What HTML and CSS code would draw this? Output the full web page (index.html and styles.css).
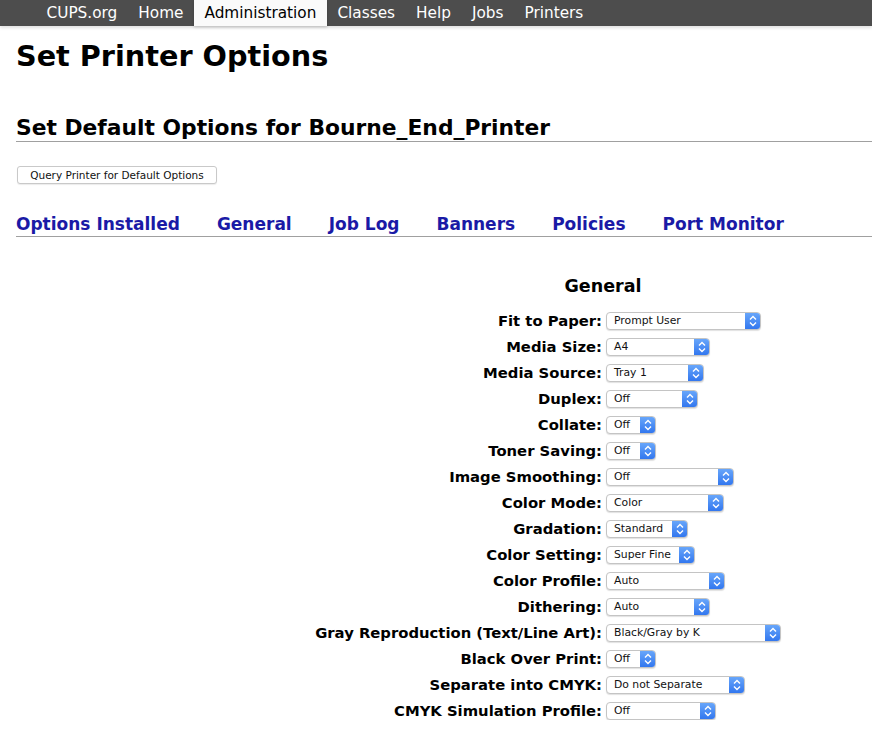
FILE: index.html
```html
<!DOCTYPE html>
<html>
<head>
<meta charset="utf-8">
<title>Set Printer Options - CUPS</title>
<link rel="stylesheet" href="styles.css">
</head>
<body>
<nav class="topbar">
  <a class="nav-item">CUPS.org</a>
  <a class="nav-item">Home</a>
  <a class="nav-item active">Administration</a>
  <a class="nav-item">Classes</a>
  <a class="nav-item">Help</a>
  <a class="nav-item">Jobs</a>
  <a class="nav-item">Printers</a>
</nav>
<main class="page">
  <h1 class="title">Set Printer Options</h1>
  <h2 class="subtitle">Set Default Options for Bourne_End_Printer</h2>
  <div class="query-row"><button class="btn">Query Printer for Default Options</button></div>
  <div class="tabs">
    <a class="tab">Options Installed</a>
    <a class="tab">General</a>
    <a class="tab">Job Log</a>
    <a class="tab">Banners</a>
    <a class="tab">Policies</a>
    <a class="tab">Port Monitor</a>
  </div>
  <h3 class="section-title">General</h3>
  <div class="form">
    <label class="lbl">Fit to Paper:</label><div class="sel" style="width:155px"><span class="val">Prompt User</span><span class="arr"><svg viewBox="0 0 16 18" width="16" height="18"><path d="M5 7.5 L8 4.5 L11 7.5 M5 10.5 L8 13.5 L11 10.5" fill="none" stroke="#fff" stroke-width="1.4"/></svg></span></div>
    <label class="lbl">Media Size:</label><div class="sel" style="width:104px"><span class="val">A4</span><span class="arr"><svg viewBox="0 0 16 18" width="16" height="18"><path d="M5 7.5 L8 4.5 L11 7.5 M5 10.5 L8 13.5 L11 10.5" fill="none" stroke="#fff" stroke-width="1.4"/></svg></span></div>
    <label class="lbl">Media Source:</label><div class="sel" style="width:98px"><span class="val">Tray 1</span><span class="arr"><svg viewBox="0 0 16 18" width="16" height="18"><path d="M5 7.5 L8 4.5 L11 7.5 M5 10.5 L8 13.5 L11 10.5" fill="none" stroke="#fff" stroke-width="1.4"/></svg></span></div>
    <label class="lbl">Duplex:</label><div class="sel" style="width:92px"><span class="val">Off</span><span class="arr"><svg viewBox="0 0 16 18" width="16" height="18"><path d="M5 7.5 L8 4.5 L11 7.5 M5 10.5 L8 13.5 L11 10.5" fill="none" stroke="#fff" stroke-width="1.4"/></svg></span></div>
    <label class="lbl">Collate:</label><div class="sel" style="width:50px"><span class="val">Off</span><span class="arr"><svg viewBox="0 0 16 18" width="16" height="18"><path d="M5 7.5 L8 4.5 L11 7.5 M5 10.5 L8 13.5 L11 10.5" fill="none" stroke="#fff" stroke-width="1.4"/></svg></span></div>
    <label class="lbl">Toner Saving:</label><div class="sel" style="width:50px"><span class="val">Off</span><span class="arr"><svg viewBox="0 0 16 18" width="16" height="18"><path d="M5 7.5 L8 4.5 L11 7.5 M5 10.5 L8 13.5 L11 10.5" fill="none" stroke="#fff" stroke-width="1.4"/></svg></span></div>
    <label class="lbl">Image Smoothing:</label><div class="sel" style="width:128px"><span class="val">Off</span><span class="arr"><svg viewBox="0 0 16 18" width="16" height="18"><path d="M5 7.5 L8 4.5 L11 7.5 M5 10.5 L8 13.5 L11 10.5" fill="none" stroke="#fff" stroke-width="1.4"/></svg></span></div>
    <label class="lbl">Color Mode:</label><div class="sel" style="width:118px"><span class="val">Color</span><span class="arr"><svg viewBox="0 0 16 18" width="16" height="18"><path d="M5 7.5 L8 4.5 L11 7.5 M5 10.5 L8 13.5 L11 10.5" fill="none" stroke="#fff" stroke-width="1.4"/></svg></span></div>
    <label class="lbl">Gradation:</label><div class="sel" style="width:82px"><span class="val">Standard</span><span class="arr"><svg viewBox="0 0 16 18" width="16" height="18"><path d="M5 7.5 L8 4.5 L11 7.5 M5 10.5 L8 13.5 L11 10.5" fill="none" stroke="#fff" stroke-width="1.4"/></svg></span></div>
    <label class="lbl">Color Setting:</label><div class="sel" style="width:89px"><span class="val">Super Fine</span><span class="arr"><svg viewBox="0 0 16 18" width="16" height="18"><path d="M5 7.5 L8 4.5 L11 7.5 M5 10.5 L8 13.5 L11 10.5" fill="none" stroke="#fff" stroke-width="1.4"/></svg></span></div>
    <label class="lbl">Color Profile:</label><div class="sel" style="width:119px"><span class="val">Auto</span><span class="arr"><svg viewBox="0 0 16 18" width="16" height="18"><path d="M5 7.5 L8 4.5 L11 7.5 M5 10.5 L8 13.5 L11 10.5" fill="none" stroke="#fff" stroke-width="1.4"/></svg></span></div>
    <label class="lbl">Dithering:</label><div class="sel" style="width:104px"><span class="val">Auto</span><span class="arr"><svg viewBox="0 0 16 18" width="16" height="18"><path d="M5 7.5 L8 4.5 L11 7.5 M5 10.5 L8 13.5 L11 10.5" fill="none" stroke="#fff" stroke-width="1.4"/></svg></span></div>
    <label class="lbl">Gray Reproduction (Text/Line Art):</label><div class="sel" style="width:175px"><span class="val">Black/Gray by K</span><span class="arr"><svg viewBox="0 0 16 18" width="16" height="18"><path d="M5 7.5 L8 4.5 L11 7.5 M5 10.5 L8 13.5 L11 10.5" fill="none" stroke="#fff" stroke-width="1.4"/></svg></span></div>
    <label class="lbl">Black Over Print:</label><div class="sel" style="width:50px"><span class="val">Off</span><span class="arr"><svg viewBox="0 0 16 18" width="16" height="18"><path d="M5 7.5 L8 4.5 L11 7.5 M5 10.5 L8 13.5 L11 10.5" fill="none" stroke="#fff" stroke-width="1.4"/></svg></span></div>
    <label class="lbl">Separate into CMYK:</label><div class="sel" style="width:139px"><span class="val">Do not Separate</span><span class="arr"><svg viewBox="0 0 16 18" width="16" height="18"><path d="M5 7.5 L8 4.5 L11 7.5 M5 10.5 L8 13.5 L11 10.5" fill="none" stroke="#fff" stroke-width="1.4"/></svg></span></div>
    <label class="lbl">CMYK Simulation Profile:</label><div class="sel" style="width:110px"><span class="val">Off</span><span class="arr"><svg viewBox="0 0 16 18" width="16" height="18"><path d="M5 7.5 L8 4.5 L11 7.5 M5 10.5 L8 13.5 L11 10.5" fill="none" stroke="#fff" stroke-width="1.4"/></svg></span></div>
  </div>
</main>
</body>
</html>
```
FILE: styles.css
```css
* { box-sizing: border-box; }
html, body { margin: 0; padding: 0; background: #fff; }
body {
  font-family: "DejaVu Sans", "Liberation Sans", sans-serif;
  color: #000;
}
.topbar {
  display: flex;
  height: 26px;
  background: #4d4d4d;
  padding-left: 36px;
  box-shadow: 0 2px 3px rgba(0,0,0,0.12);
}
.nav-item {
  display: flex;
  align-items: center;
  padding: 0 10.5px;
  font-size: 15.3px;
  color: #fff;
  text-decoration: none;
}
.nav-item.active {
  background: #fafafa;
  color: #000;
  box-shadow: 0 1px 3px rgba(0,0,0,0.2);
}
.page { padding: 0 0 0 16px; }
.title {
  margin: 12px 0 0;
  font-size: 28.7px;
  font-weight: bold;
  line-height: 36px;
}
.subtitle {
  margin: 40px 0 0;
  font-size: 21.8px;
  font-weight: bold;
  line-height: 27px;
  padding-bottom: 0;
  border-bottom: 1px solid #a0a0a0;
}
.query-row { margin-top: 22px; }
.btn {
  font-family: "DejaVu Sans", sans-serif;
  font-size: 10.5px;
  height: 18px;
  width: 200px;
  padding: 0;
  margin-left: 1px;
  background: #fff;
  border: 1px solid #c9c9c9;
  border-radius: 3px;
  color: #111;
  box-shadow: 0 1px 1px rgba(0,0,0,0.08);
}
.tabs {
  display: flex;
  gap: 37px;
  margin-top: 29px;
  border-bottom: 1px solid #a0a0a0;
  padding-bottom: 1px;
}
.tab {
  font-size: 17px;
  font-weight: bold;
  color: #1a1aa6;
  line-height: 22px;
}
.section-title {
  margin: 38px 0 0 467px;
  width: 240px;
  text-align: center;
  font-size: 17.5px;
  font-weight: bold;
  line-height: 22px;
}
.form {
  display: grid;
  grid-template-columns: 586px auto;
  column-gap: 4px;
  row-gap: 8px;
  margin-top: 15px;
  justify-items: start;
  align-items: center;
}
.lbl {
  justify-self: end;
  font-size: 14.8px;
  font-weight: bold;
  line-height: 18px;
}
.sel {
  display: flex;
  height: 18px;
  background: #fff;
  border: 1px solid #c4c4c4;
  border-radius: 4px;
  box-shadow: 0 1px 1px rgba(0,0,0,0.12);
  overflow: hidden;
}
.val {
  flex: 1;
  font-size: 10.8px;
  line-height: 16px;
  padding-left: 7px;
  color: #111;
  white-space: nowrap;
}
.arr {
  width: 16px;
  margin: -1px -1px -1px 0;
  background: linear-gradient(#6ba9fb, #2f74ee);
  border-radius: 0 4px 4px 0;
  display: flex;
  align-items: center;
  justify-content: center;
}
.arr svg { display: block; }
```
